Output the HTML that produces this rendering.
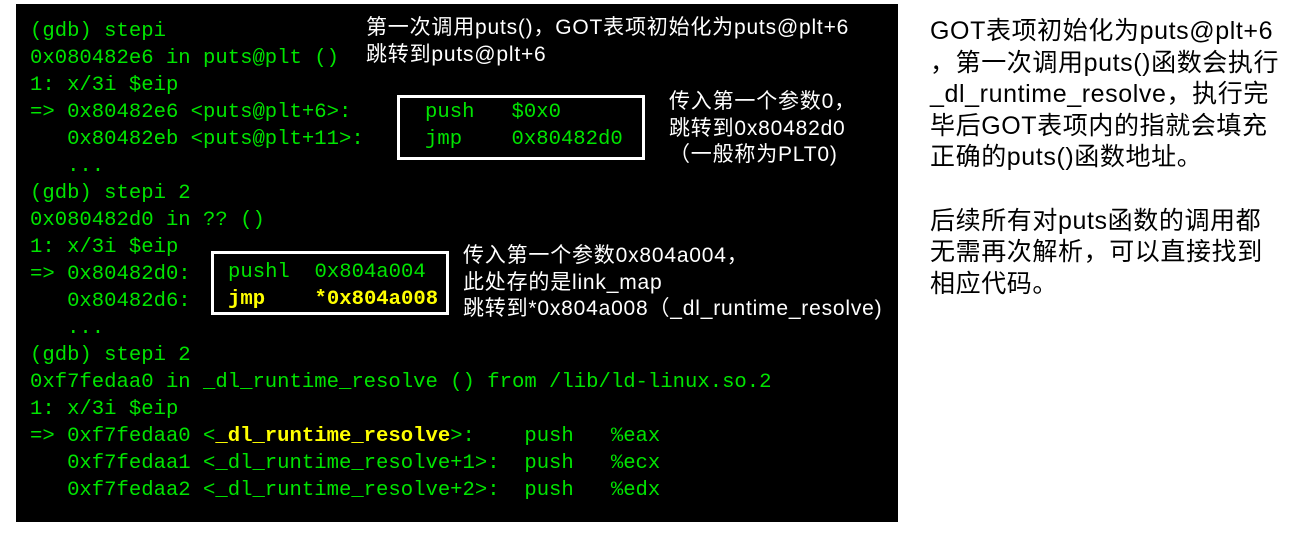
<!DOCTYPE html>
<html><head><meta charset="utf-8">
<style>
body{margin:0;width:1306px;height:534px;background:#fff;position:relative;overflow:hidden}
#term{position:absolute;left:16px;top:4px;width:882px;height:518px;background:#000}
.m{position:absolute;font-family:"Liberation Mono","DejaVu Sans Mono",monospace;font-size:20.6px;color:#00e400;white-space:pre;line-height:27px}
.y{color:#ffff00;font-weight:bold}
.a{position:absolute;font-family:"Liberation Sans","Noto Sans CJK SC",sans-serif;font-size:21px;letter-spacing:0.8px;color:#fff;white-space:pre;line-height:26.5px}
.box{position:absolute;border:3px solid #fff;box-sizing:border-box}
.r{position:absolute;left:930px;font-family:"Liberation Sans","Noto Sans CJK SC",sans-serif;font-size:25px;letter-spacing:0.6px;color:#000;white-space:pre;line-height:31.6px}
</style></head><body>
<div id="term"></div>
<div class="m" style="left:30px;top:18px">(gdb) stepi
0x080482e6 in puts@plt ()
1: x/3i $eip
=> 0x80482e6 &lt;puts@plt+6&gt;:
   0x80482eb &lt;puts@plt+11&gt;:
   ...
(gdb) stepi 2
0x080482d0 in ?? ()
1: x/3i $eip
=> 0x80482d0:
   0x80482d6:
   ...
(gdb) stepi 2
0xf7fedaa0 in _dl_runtime_resolve () from /lib/ld-linux.so.2
1: x/3i $eip
=> 0xf7fedaa0 &lt;<span class="y">_dl_runtime_resolve</span>&gt;:    push   %eax
   0xf7fedaa1 &lt;_dl_runtime_resolve+1&gt;:  push   %ecx
   0xf7fedaa2 &lt;_dl_runtime_resolve+2&gt;:  push   %edx</div>
<div class="box" style="left:397px;top:95px;width:248px;height:65px"></div>
<div class="m" style="left:425px;top:99px">push   $0x0
jmp    0x80482d0</div>
<div class="box" style="left:211px;top:251px;width:238px;height:64px"></div>
<div class="m" style="left:228px;top:259px">pushl  0x804a004
<span class="y">jmp    *0x804a008</span></div>
<div class="a" style="left:366px;top:15px">第一次调用puts()，GOT表项初始化为puts@plt+6
跳转到puts@plt+6</div>
<div class="a" style="left:669px;top:89px">传入第一个参数0，
跳转到0x80482d0
（一般称为PLT0)</div>
<div class="a" style="left:463px;top:243px">传入第一个参数0x804a004，
此处存的是link_map
跳转到*0x804a008（_dl_runtime_resolve)</div>
<div class="r" style="top:16px">GOT表项初始化为puts@plt+6
，第一次调用puts()函数会执行
_dl_runtime_resolve，执行完
毕后GOT表项内的指就会填充
正确的puts()函数地址。

后续所有对puts函数的调用都
无需再次解析，可以直接找到
相应代码。</div>
</body></html>
